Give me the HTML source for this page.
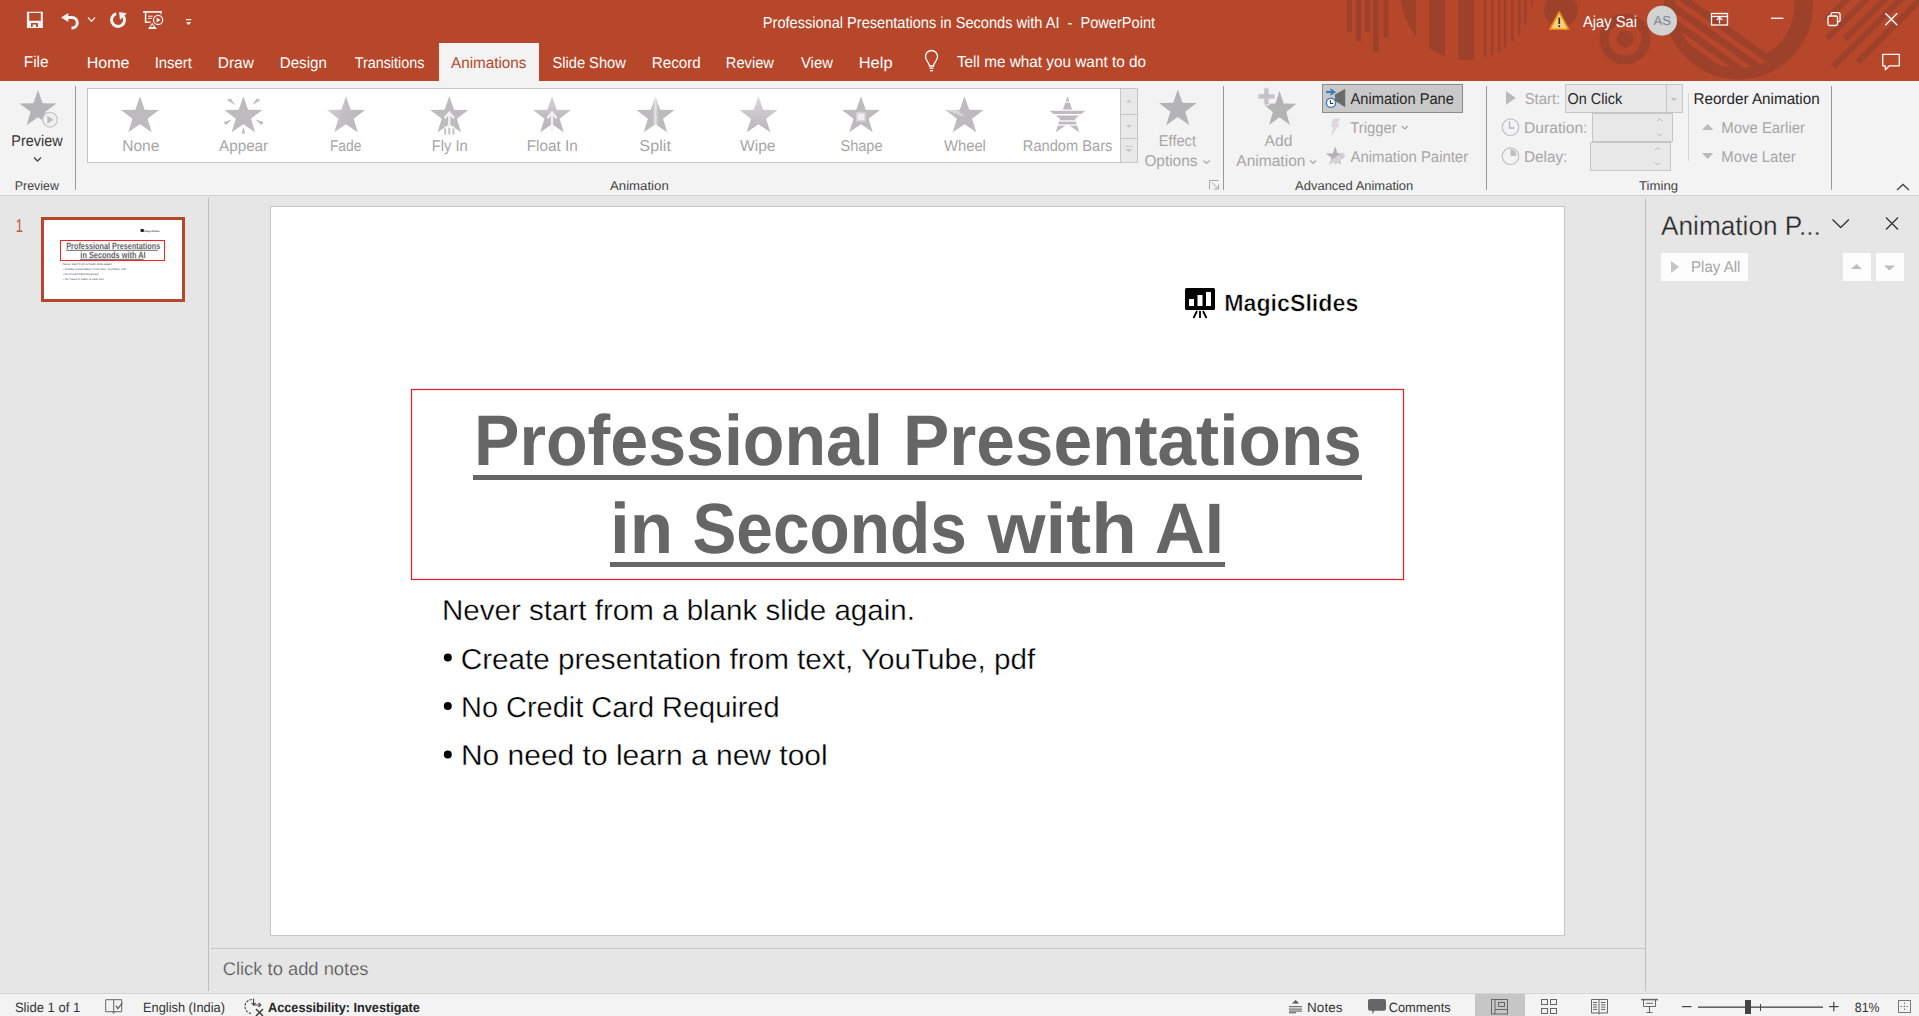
<!DOCTYPE html>
<html><head><meta charset="utf-8"><style>
html,body{margin:0;padding:0;width:1919px;height:1016px;overflow:hidden;background:#E6E6E6}
svg{display:block}
text{font-family:"Liberation Sans",sans-serif;white-space:pre;text-rendering:geometricPrecision}
</style></head><body>
<svg width="1919" height="1016" viewBox="0 0 1919 1016" xml:space="preserve">
<rect x="0" y="0" width="1919" height="81" fill="#B7472A" />
<rect x="0" y="81" width="1919" height="114" fill="#F3F3F3" />
<rect x="0" y="195" width="1919" height="1" fill="#D2D2D2" />
<rect x="0" y="196" width="1919" height="797" fill="#E6E6E6" />
<rect x="0" y="993" width="1919" height="1" fill="#D4D4D4" />
<rect x="0" y="994" width="1919" height="22" fill="#F3F3F3" />
<g fill="#9E412B"><rect x="1347" y="0" width="5" height="32"/><rect x="1356" y="0" width="5" height="41"/><rect x="1365" y="0" width="5" height="32"/><rect x="1373" y="0" width="5.5" height="52"/><rect x="1383.5" y="0" width="5.0" height="38"/></g>
<defs><clipPath id="semi"><circle cx="1467" cy="-6" r="66"/></clipPath><clipPath id="bigring"><circle cx="1739" cy="4" r="74"/></clipPath><clipPath id="tb"><rect x="0" y="0" width="1919" height="81"/></clipPath></defs>
<g clip-path="url(#semi)" fill="#9E412B"><rect x="1400" y="-80" width="16" height="200"/><rect x="1429" y="-80" width="16" height="200"/><rect x="1458" y="-80" width="16" height="200"/><rect x="1484" y="-80" width="2.5" height="200"/><rect x="1491" y="-80" width="2.5" height="200"/><rect x="1498" y="-80" width="2.5" height="200"/><rect x="1504" y="-80" width="2.5" height="200"/><rect x="1511" y="-80" width="2.5" height="200"/><rect x="1518" y="-80" width="2.5" height="200"/><rect x="1524" y="-80" width="2.5" height="200"/><rect x="1531" y="-80" width="2.5" height="200"/></g>
<g clip-path="url(#tb)"><circle cx="1561" cy="10" r="17" fill="#9E412B"/><circle cx="1625" cy="39" r="21" fill="none" stroke="#9E412B" stroke-width="9"/><circle cx="1625" cy="39" r="8.5" fill="#9E412B"/></g>
<defs><clipPath id="inner56"><circle cx="1738.5" cy="5" r="56"/></clipPath><clipPath id="inner63"><circle cx="1738.5" cy="5" r="63"/></clipPath></defs>
<g clip-path="url(#tb)"><circle cx="1738.5" cy="5" r="74.5" fill="#9E412B"/><g clip-path="url(#inner56)"><g transform="rotate(35.4 1738.5 5)"><rect x="1600" y="-100" width="300" height="128.1" fill="#B7472A"/></g></g><g clip-path="url(#inner63)"><g transform="rotate(35.4 1738.5 5)" fill="#B7472A"><rect x="1600" y="35.5" width="300" height="5.2"/><rect x="1600" y="47.9" width="300" height="5.2"/><rect x="1600" y="60.1" width="300" height="5.2"/></g></g></g>
<g clip-path="url(#tb)" fill="#9E412B"><rect x="1826.5" y="16.5" width="120" height="6" transform="rotate(-45 1826.5 19.5)"/><rect x="1827.2" y="35.5" width="120" height="6" transform="rotate(-45 1827.2 38.5)"/><rect x="1845" y="36" width="120" height="6" transform="rotate(-45 1845 39)"/><rect x="1833.2" y="63.5" width="120" height="6" transform="rotate(-45 1833.2 66.5)"/><rect x="1857.9" y="59" width="120" height="6" transform="rotate(-45 1857.9 62)"/></g>
<path d="M26.9 11.7 h16 v16.3 h-16 z M29.2 13.1 v7.7 h11.6 v-7.7 z M31 23.1 v3.8 h1.7 v-2.3 h3.3 v2.3 h1.9 v-3.8 z" fill="#F2F2F2" fill-rule="evenodd"/>
<path d="M61 17.5 l7.3 -4.4 v9 z" fill="#F2F2F2"/><path d="M67 17.5 h5 a5.3 5.3 0 0 1 0 10.6 h-0.5" fill="none" stroke="#F2F2F2" stroke-width="3"/>
<path d="M87.9 17.4 l3.6 4 l3.6 -4" fill="none" stroke="#fff" stroke-width="1.2"/>
<path d="M116.3 13.6 A6.5 6.5 0 1 0 123.2 15.9" fill="none" stroke="#F2F2F2" stroke-width="3"/><path d="M119 12 L126.8 13.3 L120 19.9 Z" fill="#F2F2F2"/>
<g fill="none" stroke="#F2F2F2"><path d="M143 11.9 h19" stroke-width="1.7"/><path d="M145.6 12.5 v9.7 h5" stroke-width="1.6"/><path d="M148 16.2 h4.6 M148 18.3 h4" stroke-width="1"/><circle cx="158.1" cy="19.9" r="4.6" stroke-width="1.3"/></g><path d="M156.6 17.4 v5 l4 -2.5 z" fill="#F2F2F2"/><path d="M152.1 22.7 l-4.1 6.3 h9 z M150.3 27 l1.8 -2.5 l1.8 2.5 z" fill="#F2F2F2" fill-rule="evenodd"/><rect x="160.5" y="12.5" width="1" height="1.8" fill="#F2F2F2"/>
<rect x="186" y="19" width="5.2" height="1.2" fill="#fff"/><path d="M186 22.3 h5.2 l-2.6 2.8 z" fill="#fff"/>
<path d="M1559.2 12 L1568.6 29.3 H1549.8 Z" fill="#F7D27A" stroke="#E98A16" stroke-width="1.6" stroke-linejoin="round"/><rect x="1558.4" y="17.5" width="1.7" height="6.5" fill="#333"/><rect x="1558.4" y="25.3" width="1.7" height="1.8" fill="#333"/>
<circle cx="1662" cy="20.7" r="15" fill="#D2D2D2"/>
<g fill="none" stroke="#fff" stroke-width="1.3"><rect x="1711.5" y="13.5" width="16" height="11.5"/><path d="M1711.5 16.5 h16"/><path d="M1719.5 23.5 v-6 M1716.8 20 l2.7 -2.7 l2.7 2.7"/></g>
<rect x="1771" y="17.6" width="12.5" height="1.3" fill="#fff"/>
<g fill="none" stroke="#fff" stroke-width="1.3"><rect x="1828" y="16" width="9.5" height="9.5" rx="1.5"/><path d="M1831 15.5 v-1 a1.8 1.8 0 0 1 1.8 -1.8 h5.5 a1.8 1.8 0 0 1 1.8 1.8 v5.5 a1.8 1.8 0 0 1 -1.8 1.8 h-0.8"/></g>
<path d="M1885.3 13.2 L1897.3 25.2 M1897.3 13.2 L1885.3 25.2" stroke="#fff" stroke-width="1.4"/>
<path d="M1882.7 54.3 h16.6 v11.5 h-10 l-4 4 v-4 h-2.6 z" fill="none" stroke="#fff" stroke-width="1.3" stroke-linejoin="round"/>
<rect x="439" y="43" width="100" height="38" fill="#F3F3F3" />
<path d="M929.5 66 c0-3 -4-5 -4-9.5 a6 6 0 0 1 12 0 c0 4.5 -4 6.5 -4 9.5 z" fill="none" stroke="#fff" stroke-width="1.3"/><rect x="929.5" y="67.5" width="4" height="1.3" fill="#fff"/><rect x="930" y="70" width="3" height="1.3" fill="#fff"/>
<defs><linearGradient id="gFade" x1="0" y1="0" x2="1" y2="0.3"><stop offset="0" stop-color="#D9D7DA"/><stop offset="0.5" stop-color="#C2C0C3"/><stop offset="1" stop-color="#B9B7BA"/></linearGradient><linearGradient id="gFloat" x1="0" y1="0" x2="0" y2="1"><stop offset="0" stop-color="#D4D2D5"/><stop offset="0.6" stop-color="#BDBBBE"/><stop offset="1" stop-color="#B8B6B9"/></linearGradient><linearGradient id="gSplit" x1="0" y1="0" x2="1" y2="0"><stop offset="0" stop-color="#BDBBBE"/><stop offset="0.42" stop-color="#BDBBBE"/><stop offset="0.5" stop-color="#E4E2E5"/><stop offset="0.58" stop-color="#BDBBBE"/><stop offset="1" stop-color="#BDBBBE"/></linearGradient><linearGradient id="gWipe" x1="0" y1="0" x2="0" y2="1"><stop offset="0" stop-color="#DAD8DB"/><stop offset="1" stop-color="#B7B5B8"/></linearGradient></defs>
<polygon points="38.00,90.00 42.57,103.16 56.50,103.44 45.40,111.86 49.43,125.19 38.00,117.23 26.57,125.19 30.60,111.86 19.50,103.44 33.43,103.16" fill="#B4B3B6" />
<circle cx="50" cy="119.7" r="7.3" fill="#F3EEF3" stroke="#C9C6CA" stroke-width="1.3"/><path d="M47.3 115.8 v8 l6.2 -4 z" fill="#BDBBBE"/>
<path d="M34 157.5 l3.5 3.5 l3.5 -3.5" fill="none" stroke="#444" stroke-width="1.3"/>
<rect x="75" y="86" width="1" height="104" fill="#9A9A9A" />
<rect x="87" y="88" width="1051" height="75" fill="#C6C6C6" />
<rect x="88" y="89" width="1032" height="73" fill="#FFFFFF" />
<rect x="1121" y="89" width="16" height="73" fill="#E8E8E8" />
<rect x="1121" y="114" width="16" height="1" fill="#C6C6C6" />
<rect x="1121" y="138" width="16" height="1" fill="#C6C6C6" />
<path d="M1126 102.5 l3 -3 l3 3 z" fill="#C8C8C8"/><path d="M1126 125 l3 3 l3 -3 z" fill="#C8C8C8"/><rect x="1125.5" y="146" width="7" height="1" fill="#C8C8C8"/><path d="M1125.5 149 l3.5 3.5 l3.5 -3.5 z" fill="#C8C8C8"/>
<polygon points="140.00,96.20 144.70,109.71 159.00,110.00 147.60,118.65 151.74,132.34 140.00,124.17 128.26,132.34 132.40,118.65 121.00,110.00 135.30,109.71" fill="#BDBBBE" />
<polygon points="243.40,96.20 248.10,109.71 262.40,110.00 251.00,118.65 255.14,132.34 243.40,124.17 231.66,132.34 235.80,118.65 224.40,110.00 238.70,109.71" fill="#BDBBBE" />
<g fill="#BDBBBE"><path d="M227 100 l3.5 -1.5 l4.8 6.5 z"/><path d="M260.5 100 l-3.5 -1.5 l-4.8 6.5 z"/><path d="M223.8 122 l1.8 3 l6.5 -5.5 z"/><path d="M263.5 122 l-1.8 3 l-6.5 -5.5 z"/><path d="M241.6 133.4 h3.6 l-1.8 -6.5 z"/></g>
<polygon points="346.00,96.20 350.70,109.71 365.00,110.00 353.60,118.65 357.74,132.34 346.00,124.17 334.26,132.34 338.40,118.65 327.00,110.00 341.30,109.71" fill="url(#gFade)" />
<polygon points="449.30,96.20 454.00,109.71 468.30,110.00 456.90,118.65 461.04,132.34 449.30,124.17 437.56,132.34 441.70,118.65 430.30,110.00 444.60,109.71" fill="#BDBBBE" />
<g fill="none" stroke="#F4F1F4" stroke-width="2.3"><path d="M449.3 113 V128"/><path d="M444.6 118.3 L449.3 112.6 L454 118.3"/></g><g fill="#C4C2C5"><rect x="444.2" y="128" width="2" height="6.5"/><rect x="448.3" y="128" width="2" height="6.5"/><rect x="452.4" y="128" width="2" height="6.5"/></g><g fill="#F4F1F4"><rect x="444.2" y="126.5" width="2" height="2"/><rect x="452.4" y="126.5" width="2" height="2"/></g>
<polygon points="552.00,96.20 556.70,109.71 571.00,110.00 559.60,118.65 563.74,132.34 552.00,124.17 540.26,132.34 544.40,118.65 533.00,110.00 547.30,109.71" fill="url(#gFloat)" />
<g fill="none" stroke="#F4F1F4" stroke-width="2.3"><path d="M552 113 V131"/><path d="M547.3 118.3 L552 112.6 L556.7 118.3"/></g>
<polygon points="655.50,96.20 660.20,109.71 674.50,110.00 663.10,118.65 667.24,132.34 655.50,124.17 643.76,132.34 647.90,118.65 636.50,110.00 650.80,109.71" fill="url(#gSplit)" />
<polygon points="758.50,96.20 763.20,109.71 777.50,110.00 766.10,118.65 770.24,132.34 758.50,124.17 746.76,132.34 750.90,118.65 739.50,110.00 753.80,109.71" fill="url(#gWipe)" />
<polygon points="861.00,96.20 865.70,109.71 880.00,110.00 868.60,118.65 872.74,132.34 861.00,124.17 849.26,132.34 853.40,118.65 842.00,110.00 856.30,109.71" fill="#BDBBBE" />
<rect x="856" y="111.8" width="10" height="10" fill="#D4D2D5"/><rect x="857.8" y="113.6" width="6.4" height="6.4" fill="#F0EEF1"/>
<polygon points="964.50,96.20 969.20,109.71 983.50,110.00 972.10,118.65 976.24,132.34 964.50,124.17 952.76,132.34 956.90,118.65 945.50,110.00 959.80,109.71" fill="#BDBBBE" />
<path d="M964.5 117 L945.8 109.9 L958 109.9 Z" fill="#D8D6D9"/>
<polygon points="1067.50,96.20 1072.20,109.71 1086.50,110.00 1075.10,118.65 1079.24,132.34 1067.50,124.17 1055.76,132.34 1059.90,118.65 1048.50,110.00 1062.80,109.71" fill="#BDBBBE" />
<g fill="#FFFFFF"><rect x="1050" y="101.5" width="36" height="1.2"/><rect x="1048" y="109.6" width="40" height="1.2"/><rect x="1048" y="114" width="40" height="1.5"/><rect x="1048" y="120.3" width="40" height="1.3"/><rect x="1048" y="124.4" width="40" height="1.3"/></g>
<g fill="none" stroke="#A8A8A8" stroke-width="1"><path d="M1209.5 189.5 v-9 h9"/><path d="M1212 182.5 l6 6 M1218.5 184.5 v4.5 h-4.5"/></g>
<polygon points="1177.80,89.50 1182.44,102.84 1196.55,103.12 1185.30,111.65 1189.39,125.16 1177.80,117.10 1166.21,125.16 1170.30,111.65 1159.05,103.12 1173.16,102.84" fill="#B4B3B6" />
<path d="M1203.5 160.5 l3 3 l3 -3" fill="none" stroke="#A6A6A6" stroke-width="1.2"/>
<rect x="1223" y="86" width="1" height="104" fill="#9A9A9A" />
<polygon points="1279.50,90.80 1283.64,103.55 1296.25,103.82 1286.20,111.97 1289.85,124.89 1279.50,117.18 1269.15,124.89 1272.80,111.97 1262.75,103.82 1275.36,103.55" fill="#B4B3B6" />
<path d="M1263.8 87.8 h5.3 v6 h6 v5.3 h-6 v6 h-5.3 v-6 h-6 v-5.3 h6 z" fill="#C4C2C5" stroke="#F3F3F3" stroke-width="1"/>
<path d="M1310 160.5 l3 3 l3 -3" fill="none" stroke="#A6A6A6" stroke-width="1.2"/>
<rect x="1322" y="84" width="141" height="29" fill="#8C8C8C" />
<rect x="1323" y="85" width="139" height="27" fill="#C9C9C9" />
<path d="M1335 94.5 L1345.2 88.8 V107.2 L1335 100.8 Z" fill="#6B6B6B"/><path d="M1326 92 h8" stroke="#3D7CC2" stroke-width="2.2"/><path d="M1330.3 88.3 L1336.2 92 L1330.3 95.7 L1330.3 94 L1333 92 L1330.3 90 Z" fill="#3D7CC2"/><circle cx="1331" cy="102.8" r="4.6" fill="#fff" stroke="#3D7CC2" stroke-width="1.4"/><path d="M1330.4 100.2 v3.3 h2.8" fill="none" stroke="#222" stroke-width="1"/>
<path d="M1333.2 118.4 H1340.4 L1337.2 124.6 H1339.8 L1330.4 136.6 L1333.4 127 H1330.6 Z" fill="#DCD8DC"/>
<path d="M1401.8 126 l3 3 l3 -3" fill="none" stroke="#A6A6A6" stroke-width="1.2"/>
<polygon points="1335.20,146.50 1337.55,153.26 1344.70,153.40 1339.00,157.72 1341.07,164.57 1335.20,160.48 1329.33,164.57 1331.40,157.72 1325.70,153.40 1332.85,153.26" fill="#B3B1B4" />
<path d="M1331 160.5 L1341.5 152.5 L1345.8 156 L1335.5 164.5 Z" fill="#D6D2D6"/><path d="M1329.3 163.5 L1332 158.5 L1334.3 161 Z" fill="#D6D2D6"/><path d="M1339 154.2 L1343.5 157.8" stroke="#BDB9BD" stroke-width="1"/>
<rect x="1486" y="86" width="1" height="104" fill="#9A9A9A" />
<path d="M1506 91 l9.7 6.9 l-9.7 6.9 z" fill="#B9B9B9"/>
<rect x="1565" y="84" width="118" height="29" fill="#C6C6C6" />
<rect x="1566" y="85" width="116" height="27" fill="#E8E8E8" />
<rect x="1666" y="85" width="1" height="27" fill="#C6C6C6" />
<path d="M1671 98 l3 3 l3 -3 z" fill="#BEBEBE"/>
<circle cx="1510.5" cy="127.2" r="8.3" fill="none" stroke="#C2BEC4" stroke-width="1.2"/><path d="M1509.5 121.5 v6.5 h5" fill="none" stroke="#B8B4BA" stroke-width="1.3"/>
<rect x="1592" y="113" width="81" height="29" fill="#C6C6C6" />
<rect x="1593" y="114" width="79" height="27" fill="#E8E8E8" />
<path d="M1657 121 l2.5 -2.5 l2.5 2.5 M1657 133.5 l2.5 2.5 l2.5 -2.5" fill="none" stroke="#B5B5B5" stroke-width="1"/>
<circle cx="1510.5" cy="156.2" r="8.3" fill="none" stroke="#C2BEC4" stroke-width="1.2"/><path d="M1510.5 149 v7 h6.2 a7 7 0 0 0 -6.2 -7 z" fill="#C2BEC4"/>
<rect x="1590" y="142" width="81" height="29" fill="#C6C6C6" />
<rect x="1591" y="143" width="79" height="27" fill="#E8E8E8" />
<path d="M1655 150 l2.5 -2.5 l2.5 2.5 M1655 162.5 l2.5 2.5 l2.5 -2.5" fill="none" stroke="#B5B5B5" stroke-width="1"/>
<rect x="1688" y="93" width="1" height="68" fill="#D6D6D6" />
<path d="M1702 130 l5.7 -6 l5.7 6 z" fill="#B9B9B9"/><path d="M1702 153 l5.7 6 l5.7 -6 z" fill="#B9B9B9"/>
<rect x="1831" y="86" width="1" height="104" fill="#9A9A9A" />
<path d="M1897 190 l6 -5.5 l6 5.5" fill="none" stroke="#444" stroke-width="1.3"/>
<rect x="208" y="198" width="1" height="793" fill="#BFBFBF" />
<rect x="41" y="217" width="144" height="85" fill="#B7472A" />
<rect x="44" y="220" width="138" height="79" fill="#FFFFFF" />
<rect x="60.5" y="240.5" width="104" height="20" fill="none" stroke="#FF2020" stroke-width="1"/>
<rect x="66.1" y="249.8" width="91.7" height="0.9" fill="#555" />
<rect x="80" y="258.8" width="63.7" height="0.9" fill="#555" />
<rect x="140.6" y="229" width="3.2" height="3" fill="#222" />
<rect x="270" y="206" width="1295" height="730" fill="#C6C6C6" />
<rect x="271" y="207" width="1293" height="728" fill="#FFFFFF" />
<rect x="1185" y="288" width="30" height="22" rx="1.5" fill="#000"/><rect x="1189" y="299" width="5" height="7" fill="#fff"/><rect x="1197.5" y="295" width="5" height="11" fill="#fff"/><rect x="1206" y="292" width="5" height="14" fill="#fff"/><path d="M1197 311 l-3.5 7 M1200 311 v7 M1203 311 l3.5 7" stroke="#000" stroke-width="1.8"/>
<rect x="411.5" y="389.5" width="992" height="190" fill="none" stroke="#E81C24" stroke-width="1.2"/>
<rect x="473" y="475" width="889" height="5" fill="#666666" />
<rect x="610" y="562" width="615" height="5" fill="#666666" />
<circle cx="447.8" cy="657.5" r="4" fill="#000"/>
<circle cx="447.8" cy="706" r="4" fill="#000"/>
<circle cx="447.8" cy="754.4" r="4" fill="#000"/>
<rect x="211" y="948" width="1434" height="1" fill="#C6C6C6" />
<rect x="1645" y="198" width="1" height="793" fill="#BFBFBF" />
<path d="M1832.5 219.5 l8.2 8 l8.2 -8" fill="none" stroke="#333" stroke-width="1.3"/>
<path d="M1886 217.5 l12 12 M1898 217.5 l-12 12" stroke="#333" stroke-width="1.3"/>
<rect x="1661" y="253" width="87" height="28" fill="#FDFDFD" />
<path d="M1671 261 v12 l8 -6 z" fill="#C4C4C4"/>
<rect x="1843" y="253" width="28" height="28" fill="#FDFDFD" />
<rect x="1876" y="253" width="28" height="28" fill="#FDFDFD" />
<path d="M1851 269 l5.5 -5 l5.5 5 z" fill="#BDBDBD"/><path d="M1884 265.5 l5.5 5 l5.5 -5 z" fill="#BDBDBD"/>
<g fill="none" stroke="#666" stroke-width="1"><path d="M105.7 999.7 h8 v12 h-8 z"/><path d="M113.7 999.7 h8 v12 h-8"/><path d="M112.2 1012 l1.5 1.5 l1.5 -1.5"/><path d="M116 1005.7 l1.8 2.9 l4.7 -5.7" stroke-width="1.4"/></g>
<g fill="none" stroke="#444" stroke-width="1.1"><path d="M252 999.5 a7 7 0 0 0 0 14" stroke-dasharray="2.5 1.2"/><path d="M253.6 998.5 v6.5 h7"/><path d="M251.6 1002.8 l2 2.2 l2 -2.2 M258.5 1003 l2.2 2 l-2.2 2"/><path d="M256 1009 l7 7 M263 1009 l-7 7" stroke-width="1.6"/></g>
<g fill="#555"><path d="M1292 1003.6 l3.6 -3.6 l3.6 3.6 z"/><rect x="1289" y="1006.2" width="13" height="1"/><rect x="1289" y="1008.6" width="13" height="1"/><rect x="1289" y="1010.6" width="13" height="1"/><rect x="1289" y="1012.3" width="7" height="1"/></g>
<path d="M1370 999 h14 a2 2 0 0 1 2 2 v7.7 a2 2 0 0 1 -2 2 h-9.5 l-2 3.6 l-0.2 -3.6 h-2.3 a2 2 0 0 1 -2 -2 v-7.7 a2 2 0 0 1 2 -2 z" fill="#666"/>
<rect x="1475" y="994" width="50" height="22" fill="#C6C6C6" />
<g fill="none" stroke="#666" stroke-width="1"><rect x="1491.5" y="999.5" width="16" height="14.5"/><path d="M1495 999.5 v14.5 M1495 1009.5 h12.5"/><rect x="1498.5" y="1002.5" width="6" height="4"/></g>
<g fill="none" stroke="#666" stroke-width="1"><rect x="1541.5" y="999.5" width="6" height="5"/><rect x="1550.5" y="999.5" width="6" height="5"/><rect x="1541.5" y="1008.5" width="6" height="5"/><rect x="1550.5" y="1008.5" width="6" height="5"/></g>
<g fill="none" stroke="#666" stroke-width="1"><path d="M1591.5 999.5 h7.5 v13.5 h-7.5 z M1599 999.5 h8.5 v13.5 h-8.5"/><path d="M1593 1002.5 h4 M1593 1004.8 h4 M1593 1007.1 h4 M1593 1009.4 h4 M1601 1002.5 h4.5 M1601 1004.8 h4.5 M1601 1007.1 h4.5 M1601 1009.4 h4.5"/><path d="M1599 1013 v1.5"/></g>
<g fill="none" stroke="#666"><path d="M1641 999.6 h17" stroke-width="1.5"/><path d="M1643.5 1000 v6.5 h12 v-6.5 M1649.5 1006.5 v6 M1646.5 1012.5 h6 M1646 1003.3 h7" stroke-width="1"/></g>
<rect x="1682" y="1006" width="9.5" height="1.2" fill="#444" />
<rect x="1698" y="1006.5" width="125" height="1.3" fill="#444" />
<rect x="1745" y="1000" width="6" height="14" fill="#444" />
<rect x="1760" y="1004" width="1" height="7" fill="#444" />
<rect x="1829" y="1006" width="9.5" height="1.2" fill="#444" />
<rect x="1833.2" y="1001.8" width="1.2" height="9.5" fill="#444" />
<g fill="none" stroke="#777" stroke-width="1"><rect x="1898.5" y="1000.5" width="12" height="12"/><path d="M1904.5 1002.5 v8 M1900.5 1006.5 h8" stroke-dasharray="1.5 1.5"/></g>
<text transform="translate(762.83 28.00) scale(0.9148 1)" font-size="15.94" font-weight="normal" fill="#FFFFFF" >Professional Presentations in Seconds with AI  -  PowerPoint</text>
<text transform="translate(1583.00 26.70) scale(0.9219 1)" font-size="15.94" font-weight="normal" fill="#FFFFFF" >Ajay Sai</text>
<text transform="translate(1653.50 25.30) scale(1.0049 1)" font-size="13.04" font-weight="normal" fill="#4F5E73" stroke="#D2D2D2" stroke-width="0.35">AS</text>
<text transform="translate(23.77 67.00) scale(0.9828 1)" font-size="15.65" font-weight="normal" fill="#FFFFFF" >File</text>
<text transform="translate(86.71 68.00) scale(1.0267 1)" font-size="15.65" font-weight="normal" fill="#FFFFFF" >Home</text>
<text transform="translate(154.66 68.00) scale(0.9531 1)" font-size="15.65" font-weight="normal" fill="#FFFFFF" >Insert</text>
<text transform="translate(217.76 68.00) scale(0.9888 1)" font-size="15.65" font-weight="normal" fill="#FFFFFF" >Draw</text>
<text transform="translate(279.79 68.00) scale(0.9659 1)" font-size="15.65" font-weight="normal" fill="#FFFFFF" >Design</text>
<text transform="translate(354.71 68.00) scale(0.9177 1)" font-size="15.65" font-weight="normal" fill="#FFFFFF" >Transitions</text>
<text transform="translate(552.41 68.00) scale(0.9383 1)" font-size="15.65" font-weight="normal" fill="#FFFFFF" >Slide Show</text>
<text transform="translate(651.78 68.00) scale(0.9726 1)" font-size="15.65" font-weight="normal" fill="#FFFFFF" >Record</text>
<text transform="translate(725.83 68.00) scale(0.9364 1)" font-size="15.65" font-weight="normal" fill="#FFFFFF" >Review</text>
<text transform="translate(801.00 68.00) scale(0.9477 1)" font-size="15.65" font-weight="normal" fill="#FFFFFF" >View</text>
<text transform="translate(858.68 68.00) scale(1.0536 1)" font-size="15.65" font-weight="normal" fill="#FFFFFF" >Help</text>
<text transform="translate(451.00 68.00) scale(0.9746 1)" font-size="15.65" font-weight="normal" fill="#B7472A" >Animations</text>
<text transform="translate(956.89 67.00) scale(0.9616 1)" font-size="15.94" font-weight="normal" fill="#FFFFFF" >Tell me what you want to do</text>
<text transform="translate(11.35 146.00) scale(0.9204 1)" font-size="15.65" font-weight="normal" fill="#333333" >Preview</text>
<text transform="translate(14.71 189.50) scale(0.9744 1)" font-size="12.75" font-weight="normal" fill="#444444" >Preview</text>
<text transform="translate(122.26 151.00) scale(0.9902 1)" font-size="15.65" font-weight="normal" fill="#A6A6A6" >None</text>
<text transform="translate(219.00 151.00) scale(0.9748 1)" font-size="15.65" font-weight="normal" fill="#A6A6A6" >Appear</text>
<text transform="translate(329.89 151.00) scale(0.8861 1)" font-size="15.65" font-weight="normal" fill="#A6A6A6" >Fade</text>
<text transform="translate(431.82 151.00) scale(0.9409 1)" font-size="15.65" font-weight="normal" fill="#A6A6A6" >Fly In</text>
<text transform="translate(526.77 151.00) scale(0.9787 1)" font-size="15.65" font-weight="normal" fill="#A6A6A6" >Float In</text>
<text transform="translate(639.35 151.00) scale(1.0383 1)" font-size="15.65" font-weight="normal" fill="#A6A6A6" >Split</text>
<text transform="translate(740.00 151.00) scale(0.9973 1)" font-size="15.65" font-weight="normal" fill="#A6A6A6" >Wipe</text>
<text transform="translate(840.42 151.00) scale(0.9304 1)" font-size="15.65" font-weight="normal" fill="#A6A6A6" >Shape</text>
<text transform="translate(944.00 151.00) scale(0.9449 1)" font-size="15.65" font-weight="normal" fill="#A6A6A6" >Wheel</text>
<text transform="translate(1022.83 151.00) scale(0.9364 1)" font-size="15.65" font-weight="normal" fill="#A6A6A6" >Random Bars</text>
<text transform="translate(610.00 189.50) scale(1.0358 1)" font-size="12.75" font-weight="normal" fill="#444444" >Animation</text>
<text transform="translate(1158.83 146.00) scale(0.9347 1)" font-size="15.65" font-weight="normal" fill="#A6A6A6" >Effect</text>
<text transform="translate(1144.38 165.50) scale(0.9840 1)" font-size="15.65" font-weight="normal" fill="#A6A6A6" >Options</text>
<text transform="translate(1264.50 145.80) scale(1.0011 1)" font-size="15.65" font-weight="normal" fill="#A6A6A6" >Add</text>
<text transform="translate(1236.30 165.50) scale(0.9938 1)" font-size="15.65" font-weight="normal" fill="#A6A6A6" >Animation</text>
<text transform="translate(1350.60 104.20) scale(0.9351 1)" font-size="15.65" font-weight="normal" fill="#262626" >Animation Pane</text>
<text transform="translate(1350.30 133.00) scale(0.9468 1)" font-size="15.65" font-weight="normal" fill="#A6A6A6" >Trigger</text>
<text transform="translate(1350.60 161.50) scale(0.9518 1)" font-size="15.65" font-weight="normal" fill="#A6A6A6" >Animation Painter</text>
<text transform="translate(1295.10 189.50) scale(1.0166 1)" font-size="12.75" font-weight="normal" fill="#444444" >Advanced Animation</text>
<text transform="translate(1524.71 104.40) scale(0.9491 1)" font-size="15.65" font-weight="normal" fill="#A6A6A6" >Start:</text>
<text transform="translate(1567.62 104.40) scale(0.9221 1)" font-size="15.65" font-weight="normal" fill="#262626" >On Click</text>
<text transform="translate(1524.05 133.00) scale(0.9986 1)" font-size="15.65" font-weight="normal" fill="#A6A6A6" >Duration:</text>
<text transform="translate(1524.08 162.00) scale(0.9751 1)" font-size="15.65" font-weight="normal" fill="#A6A6A6" >Delay:</text>
<text transform="translate(1693.38 104.40) scale(0.9753 1)" font-size="15.65" font-weight="normal" fill="#262626" >Reorder Animation</text>
<text transform="translate(1721.31 133.00) scale(0.9526 1)" font-size="15.65" font-weight="normal" fill="#A6A6A6" >Move Earlier</text>
<text transform="translate(1721.31 162.00) scale(0.9513 1)" font-size="15.65" font-weight="normal" fill="#A6A6A6" >Move Later</text>
<text transform="translate(1639.04 189.50) scale(1.0320 1)" font-size="12.75" font-weight="normal" fill="#444444" >Timing</text>
<text transform="translate(15.79 231.90) scale(0.6929 1)" font-size="18.70" font-weight="normal" fill="#C0553A" >1</text>
<text transform="translate(66.26 249.30) scale(0.8101 1)" font-size="9.00" font-weight="bold" fill="#666666" >Professional Presentations</text>
<text transform="translate(80.36 258.00) scale(0.8183 1)" font-size="9.00" font-weight="bold" fill="#666666" >in Seconds with AI</text>
<text transform="translate(62.55 265.00) scale(1.0825 1)" font-size="2.90" font-weight="normal" fill="#505062" >Never start from a blank slide again.</text>
<text transform="translate(62.71 270.00) scale(1.0895 1)" font-size="2.90" font-weight="normal" fill="#505062" >• Create presentation from text, YouTube, pdf</text>
<text transform="translate(62.71 274.90) scale(1.0547 1)" font-size="2.90" font-weight="normal" fill="#505062" >• No Credit Card Required</text>
<text transform="translate(62.70 279.90) scale(1.1067 1)" font-size="2.90" font-weight="normal" fill="#505062" >• No need to learn a new tool</text>
<text transform="translate(144.34 232.00) scale(1.0400 1)" font-size="2.57" font-weight="bold" fill="#555555" >MagicSlides</text>
<text transform="translate(1224.21 310.90) scale(0.9845 1)" font-size="23.57" font-weight="bold" fill="#000000" stroke="#FFFFFF" stroke-width="0.5">MagicSlides</text>
<text transform="translate(474.01 465.20) scale(0.9538 1)" font-size="71.43" font-weight="bold" fill="#666666" >Professional</text>
<text transform="translate(902.94 465.20) scale(0.9716 1)" font-size="71.43" font-weight="bold" fill="#666666" >Presentations</text>
<text transform="translate(609.93 552.60) scale(0.9955 1)" font-size="71.43" font-weight="bold" fill="#666666" >in</text>
<text transform="translate(692.48 552.60) scale(0.9213 1)" font-size="71.43" font-weight="bold" fill="#666666" >Seconds</text>
<text transform="translate(987.55 552.60) scale(1.0446 1)" font-size="71.43" font-weight="bold" fill="#666666" >with</text>
<text transform="translate(1154.82 552.60) scale(0.9686 1)" font-size="71.43" font-weight="bold" fill="#666666" >AI</text>
<text transform="translate(442.04 620.10) scale(1.0247 1)" font-size="28.84" font-weight="normal" fill="#000000" stroke="#FFFFFF" stroke-width="0.3">Never start from a blank slide again.</text>
<text transform="translate(460.72 668.50) scale(1.0290 1)" font-size="28.84" font-weight="normal" fill="#000000" stroke="#FFFFFF" stroke-width="0.3">Create presentation from text, YouTube, pdf</text>
<text transform="translate(460.98 717.00) scale(1.0040 1)" font-size="28.84" font-weight="normal" fill="#000000" stroke="#FFFFFF" stroke-width="0.3">No Credit Card Required</text>
<text transform="translate(460.90 765.40) scale(1.0403 1)" font-size="28.84" font-weight="normal" fill="#000000" stroke="#FFFFFF" stroke-width="0.3">No need to learn a new tool</text>
<text transform="translate(222.68 974.90) scale(0.9970 1)" font-size="18.41" font-weight="normal" fill="#4A4A4A" stroke="#E6E6E6" stroke-width="0.3">Click to add notes</text>
<text transform="translate(1661.00 235.00) scale(0.9724 1)" font-size="26.96" font-weight="normal" fill="#262626" stroke="#E6E6E6" stroke-width="0.3">Animation P...</text>
<text transform="translate(1691.10 271.60) scale(0.9606 1)" font-size="15.65" font-weight="normal" fill="#A6A6A6" >Play All</text>
<text transform="translate(14.88 1012.00) scale(0.9717 1)" font-size="13.48" font-weight="normal" fill="#333333" >Slide 1 of 1</text>
<text transform="translate(142.97 1012.00) scale(0.9519 1)" font-size="13.48" font-weight="normal" fill="#333333" >English (India)</text>
<text transform="translate(268.05 1012.00) scale(0.9567 1)" font-size="13.29" font-weight="bold" fill="#262626" >Accessibility: Investigate</text>
<text transform="translate(1307.12 1012.00) scale(1.0022 1)" font-size="13.48" font-weight="normal" fill="#333333" >Notes</text>
<text transform="translate(1388.76 1012.00) scale(0.9503 1)" font-size="13.48" font-weight="normal" fill="#333333" >Comments</text>
<text transform="translate(1854.81 1012.00) scale(0.9138 1)" font-size="13.48" font-weight="normal" fill="#333333" >81%</text>
</svg></body></html>
